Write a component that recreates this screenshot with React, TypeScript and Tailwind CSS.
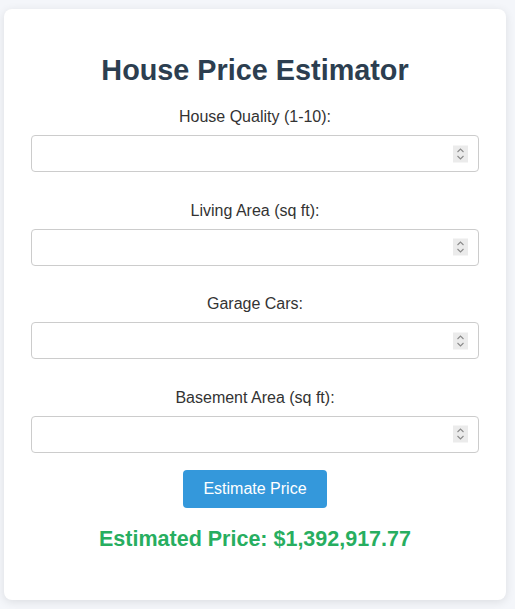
import React from "react";

function Spinner() {
  return (
    <div className="absolute right-[10px] top-1/2 -translate-y-1/2 w-[15px] h-[17px] bg-[#ebebeb] flex items-center justify-center">
      <svg width="9" height="13" viewBox="0 0 9 13" fill="none">
        <path d="M1.5 4.5 L4.5 1.5 L7.5 4.5" stroke="#8a8a8a" strokeWidth="1.1" />
        <path d="M1.5 8.5 L4.5 11.5 L7.5 8.5" stroke="#8a8a8a" strokeWidth="1.1" />
      </svg>
    </div>
  );
}

function Field({ label, first }: { label: string; first?: boolean }) {
  return (
    <div className={first ? "mt-[21px]" : "mt-[28.5px]"}>
      <div className="text-center text-[16px] leading-[19px] text-[#333]">{label}</div>
      <div className="relative mt-[9px] h-[37px] border border-[#ccc] rounded-[4px] bg-white">
        <Spinner />
      </div>
    </div>
  );
}

export default function App() {
  return (
    <div className="min-h-[609px] bg-[#f4f6fa] pt-[9px] px-[4px] pb-[9px] font-['Liberation_Sans',Arial,sans-serif]">
      <div className="w-[502px] h-[591px] bg-white rounded-[8px] shadow-[0_2px_10px_rgba(0,0,0,0.1)] px-[27px] pt-[45px]">
        <h1 className="text-center text-[28.8px] leading-[32px] font-bold text-[#2c3e50]">
          House Price Estimator
        </h1>
        <Field label="House Quality (1-10):" first />
        <Field label="Living Area (sq ft):" />
        <Field label="Garage Cars:" />
        <Field label="Basement Area (sq ft):" />
        <div className="flex justify-center mt-[17.5px]">
          <button className="w-[144px] h-[38px] bg-[#3498db] text-white text-[16px] rounded-[4px]">
            Estimate Price
          </button>
        </div>
        <div className="mt-[19px] text-center text-[21.5px] leading-[25px] font-bold text-[#27ae60]">
          Estimated Price: $1,392,917.77
        </div>
      </div>
    </div>
  );
}
